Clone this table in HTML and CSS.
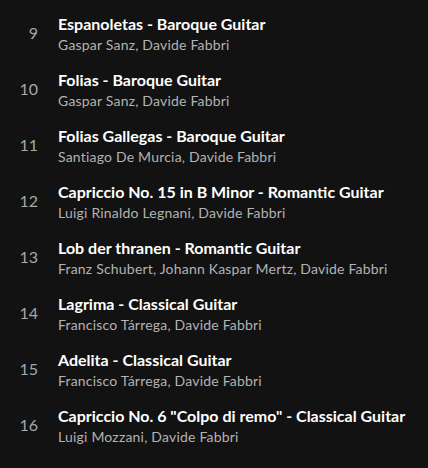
FILE: index.html
```html
<!DOCTYPE html>
<html>
<head>
<meta charset="utf-8">
<link rel="stylesheet" href="styles.css">
</head>
<body>
<ol class="tracks">
  <li class="track"><span class="num">9</span><div class="info"><div class="title">Espanoletas - Baroque Guitar</div><div class="artists">Gaspar Sanz, Davide Fabbri</div></div></li>
  <li class="track"><span class="num">10</span><div class="info"><div class="title">Folias - Baroque Guitar</div><div class="artists">Gaspar Sanz, Davide Fabbri</div></div></li>
  <li class="track"><span class="num">11</span><div class="info"><div class="title">Folias Gallegas - Baroque Guitar</div><div class="artists">Santiago De Murcia, Davide Fabbri</div></div></li>
  <li class="track"><span class="num">12</span><div class="info"><div class="title">Capriccio No. 15 in B Minor - Romantic Guitar</div><div class="artists">Luigi Rinaldo Legnani, Davide Fabbri</div></div></li>
  <li class="track"><span class="num">13</span><div class="info"><div class="title">Lob der thranen - Romantic Guitar</div><div class="artists">Franz Schubert, Johann Kaspar Mertz, Davide Fabbri</div></div></li>
  <li class="track"><span class="num">14</span><div class="info"><div class="title">Lagrima - Classical Guitar</div><div class="artists">Francisco Tárrega, Davide Fabbri</div></div></li>
  <li class="track"><span class="num">15</span><div class="info"><div class="title">Adelita - Classical Guitar</div><div class="artists">Francisco Tárrega, Davide Fabbri</div></div></li>
  <li class="track"><span class="num">16</span><div class="info"><div class="title">Capriccio No. 6 "Colpo di remo" - Classical Guitar</div><div class="artists">Luigi Mozzani, Davide Fabbri</div></div></li>
</ol>
</body>
</html>
```
FILE: styles.css
```css
html, body {
  margin: 0;
  padding: 0;
  background: #121212;
}
body {
  font-family: "Lato", "Noto Sans", sans-serif;
  width: 428px;
  height: 468px;
  overflow: hidden;
}
.tracks {
  list-style: none;
  margin: 0;
  padding: 6px 0 0 0;
}
.track {
  display: flex;
  align-items: center;
  height: 56px;
  gap: 20px;
}
.num {
  width: 38px;
  flex: none;
  text-align: right;
  font-size: 16px;
  line-height: 20px;
  color: #a7a7a7;
  margin-top: -3px;
}
.info {
  display: flex;
  flex-direction: column;
  gap: 2px;
  min-width: 0;
}
.title {
  font-size: 16px;
  line-height: 20px;
  font-weight: 700;
  color: #ffffff;
  white-space: nowrap;
}
.artists {
  font-size: 14px;
  line-height: 18px;
  color: #b3b3b3;
  letter-spacing: 0.2px;
  white-space: nowrap;
}
```
